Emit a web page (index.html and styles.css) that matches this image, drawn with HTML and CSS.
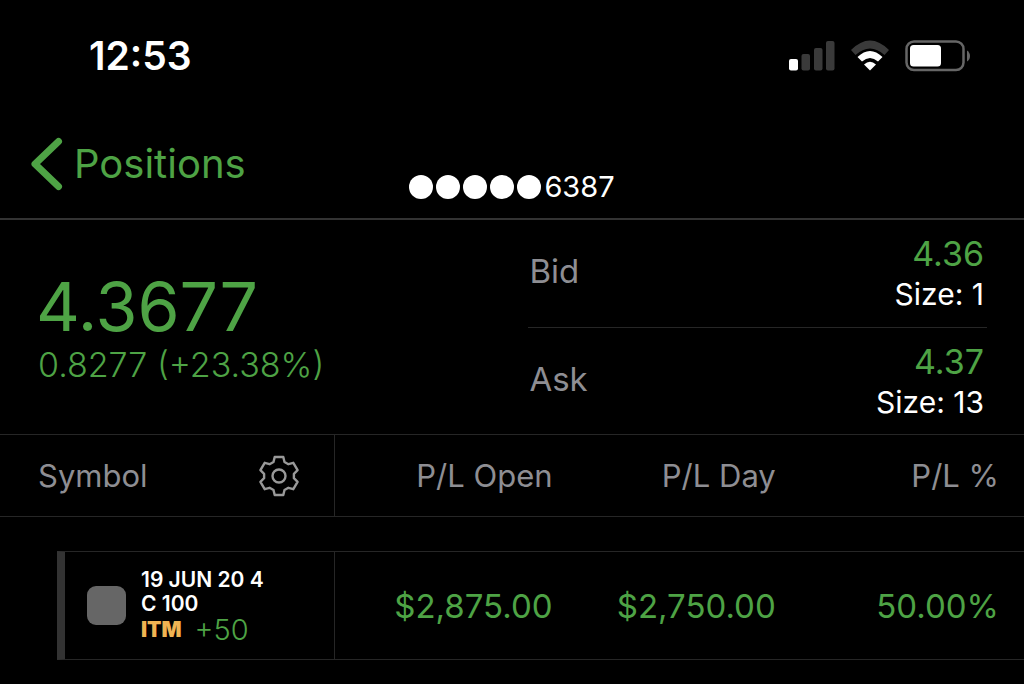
FILE: index.html
```html
<!DOCTYPE html>
<html lang="en">
<head>
	<meta charset="UTF-8">
	<meta name="viewport" content="width=device-width, initial-scale=1">
	<title>Positions</title>
	<link rel="stylesheet" href="styles.css">
</head>
<body>
	<div class="status-bar">
		<span class="time">12:53</span>
		<div class="status-icons">
			<svg class="signal" width="46" height="32" viewBox="0 0 46 32" aria-hidden="true">
				<rect class="on" x="0" y="19" width="9" height="11.5" rx="2"/>
				<rect class="off" x="12.5" y="14" width="8.5" height="16.500" rx="2"/>
				<rect class="off" x="25" y="8" width="8.5" height="22.5" rx="2"/>
				<rect class="off" x="37" y="1" width="8.5" height="29.5" rx="2"/>
			</svg>
			<svg class="wifi" width="40" height="32" viewBox="0 0 40 32" aria-hidden="true">
				<path class="off" d="M1 10 Q20 -9 39 10 L34.5 15 Q20 2 5.5 15 Z"/>
				<path class="on" d="M7.5 17 Q20 5 32.5 17 L28 21.5 Q20 14.500 12 21.5 Z"/>
				<path class="on" d="M14 24.5 Q20 19 26 24.5 L20 30.5 Z"/>
			</svg>
			<svg class="battery" width="66" height="32" viewBox="0 0 66 32" aria-hidden="true">
				<rect class="shell" x="1.5" y="1.5" width="57" height="28.5" rx="7.5"/>
				<rect class="on" x="5" y="5" width="31" height="21.5" rx="3.5"/>
				<path class="nub" d="M62 10.5 Q65 12.5 65 16 Q65 19.5 62 21.5 Z"/>
			</svg>
		</div>
	</div>

	<nav class="nav">
		<a class="back" href="#">
			<svg width="34" height="54" viewBox="0 0 34 54" aria-hidden="true">
				<path d="M28.5 4.5 L5 27 L28.5 49.5"/>
			</svg>
			Positions
		</a>
		<div class="account">
			<i></i><i></i><i></i><i></i><i></i>
			<span>6387</span>
		</div>
	</nav>

	<main>
		<section class="quote">
			<div class="last">
				<div class="price">4.3677</div>
				<div class="change">0.8277 (+23.38%)</div>
			</div>
			<div class="book">
				<div class="side">
					<span class="label">Bid</span>
					<div class="values">
						<div class="amount">4.36</div>
						<div class="size">Size: 1</div>
					</div>
				</div>
				<div class="side">
					<span class="label">Ask</span>
					<div class="values">
						<div class="amount">4.37</div>
						<div class="size">Size: 13</div>
					</div>
				</div>
			</div>
		</section>

		<table class="positions">
			<thead>
				<tr>
					<th class="col-symbol" scope="col">
						<div class="symbol-head">
							Symbol
							<button class="settings" type="button" aria-label="Column settings">
								<svg width="42" height="42" viewBox="-21 -21 42 42" aria-hidden="true">
									<path d="M-5.5 -14 L-4.3 -19 H4.3 L5.5 -14 L9.4 -11.8 L14.3 -13.2 L18.6 -5.8 L14.9 -2.2 V2.2 L18.6 5.8 L14.3 13.2 L9.4 11.8 L5.5 14 L4.3 19 H-4.3 L-5.5 14 L-9.4 11.8 L-14.3 13.2 L-18.6 5.8 L-14.9 2.2 V-2.2 L-18.6 -5.8 L-14.3 -13.2 L-9.4 -11.8 Z"/>
									<circle r="6.5"/>
								</svg>
							</button>
						</div>
					</th>
					<th class="col-open" scope="col">P/L Open</th>
					<th scope="col">P/L Day</th>
					<th scope="col">P/L %</th>
				</tr>
			</thead>
			<tbody>
				<tr class="spacer"><td colspan="4"></td></tr>
				<tr class="row">
					<td class="contract-cell">
						<div class="contract">
							<span class="marker"></span>
							<div class="contract-text">
								<div>19 JUN 20 4</div>
								<div>C 100</div>
								<div class="status"><b>ITM</b> <span class="qty">+50</span></div>
							</div>
						</div>
					</td>
					<td>$2,875.00</td>
					<td>$2,750.00</td>
					<td>50.00%</td>
				</tr>
			</tbody>
		</table>
	</main>
</body>
</html>
```

FILE: styles.css
```css
*{box-sizing:border-box;}
body{margin:0;background:#000;color:#fff;font-family:Inter,"Liberation Sans",sans-serif;font-size:32px;}
svg{display:block;}

/* status bar */
.status-bar{display:flex;justify-content:space-between;align-items:center;height:112px;padding:0 53px 0 89px;}
.time{font-size:39px;font-weight:600;line-height:48px;}
.status-icons{display:flex;gap:15px;}
.on{fill:#fff;}
.off{fill:#3a3a3a;}
.shell{fill:none;stroke:#666;stroke-width:2.5;}
.nub{fill:#666;}

/* navigation */
.nav{display:grid;grid-template-columns:1fr auto 1fr;align-items:start;height:108px;padding:25px 30px 0;border-bottom:2px solid #333;}
.back{display:flex;align-items:center;gap:10px;color:#4ea345;font-size:40px;line-height:54px;text-decoration:none;}
.back path{fill:none;stroke:#4ea345;stroke-width:7;stroke-linecap:round;stroke-linejoin:round;}
.account{display:flex;align-items:center;gap:3px;padding-top:32px;font-size:29px;line-height:36px;}
.account i{width:24px;height:24px;border-radius:50%;background:#fff;}

/* quote */
.quote{display:flex;border-bottom:1px solid #262626;}
.last{flex:1;padding:44px 0 0 36px;color:#4ea345;}
.price{font-size:68px;font-weight:400;line-height:84px;}
.change{padding-left:2px;font-size:34px;font-weight:300;line-height:34px;}
.book{width:48.4%;padding-right:37px;}
.side{display:flex;justify-content:space-between;height:107px;padding-top:14px;}
.side + .side{border-top:1px solid #262626;}
.label{padding-left:1px;color:#8e8e93;font-size:33px;font-weight:400;line-height:74px;}
.values{padding-right:3px;text-align:right;}
.amount{color:#4ea345;font-size:34px;font-weight:400;line-height:40px;}
.size{font-size:30px;line-height:40px;}

/* positions table */
.positions{width:100%;table-layout:fixed;border-collapse:separate;border-spacing:0;}
.positions th{height:82px;padding:0 25px 0 0;border-bottom:1px solid #262626;color:#8e8e93;font-size:31px;font-weight:400;text-align:right;}
.positions .col-symbol{width:32.7%;padding:0 34px 0 38px;border-right:1px solid #262626;text-align:left;}
.positions .col-open{width:23.7%;}
.symbol-head{display:flex;justify-content:space-between;align-items:center;}
.settings{padding:0;border:0;background:none;}
.settings path,.settings circle{fill:none;stroke:#999;stroke-width:2.4;stroke-linejoin:round;}
.spacer td{height:34px;padding:0;}
.row td{padding:0 25px 0 0;border:solid #262626;border-width:1px 0;color:#4ea345;font-size:33px;font-weight:400;text-align:right;}
.row .contract-cell{padding:0 0 0 57px;border-width:0 1px 0 0;text-align:left;}
.contract{display:flex;align-items:center;gap:15px;height:109px;padding-left:22px;border:solid #262626;border-width:1px 0;border-left:8px solid #333;}
.marker{width:39px;height:39px;border-radius:9px;background:#666;}
.contract-text{color:#fff;font-size:21px;font-weight:600;line-height:24px;}
.status{display:flex;align-items:center;gap:13px;line-height:28px;}
.status b{color:#f0b453;font-weight:900;}
.qty{color:#4ea345;font-size:29px;font-weight:300;}
```
